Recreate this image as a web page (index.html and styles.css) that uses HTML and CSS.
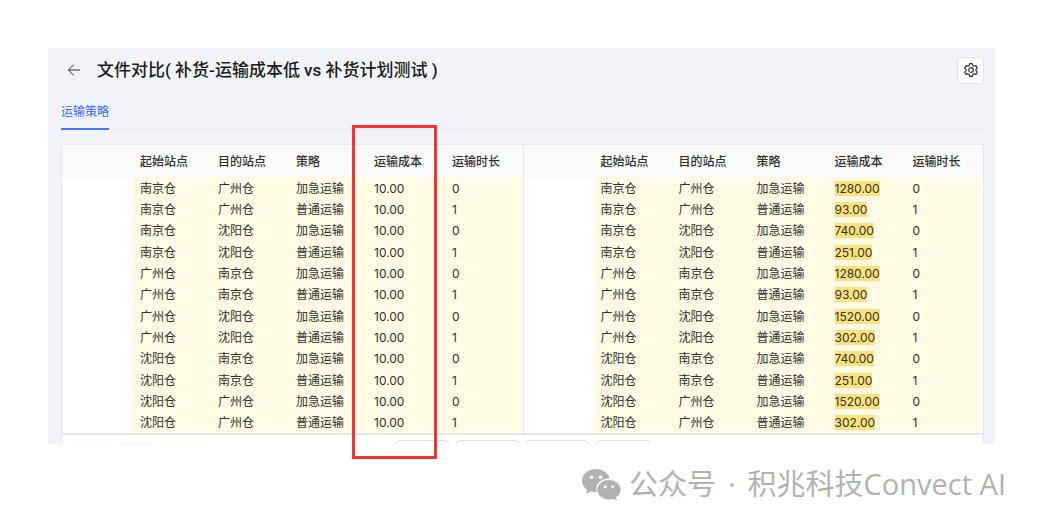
FILE: index.html
```html
<!DOCTYPE html>
<html lang="zh-CN">
<head>
<meta charset="utf-8">
<meta name="viewport" content="width=device-width, initial-scale=1">
<title>文件对比</title>
<link rel="stylesheet" href="styles.css">
</head>
<body>
<main class="app">
  <header class="topbar">
    <button class="back" type="button" aria-label="返回">
      <svg viewBox="0 0 14 14" width="14" height="14" fill="none" stroke="currentColor" stroke-width="1"><path d="M13 7H1.4M6.8 1.6 1.4 7l5.4 5.4"/></svg>
    </button>
    <h1 class="title">文件对比( 补货-运输成本低 vs 补货计划测试 )</h1>
    <button class="settings" type="button" aria-label="设置">
      <svg viewBox="0 0 16 16" width="16" height="16" fill="none" stroke="currentColor" stroke-width="1.2" stroke-linejoin="round"><path d="M6.7 1.6h2.6l.5 1.8 1.3.8 1.9-.5 1.3 2.2L13 7.2v1.6l1.3 1.3-1.3 2.2-1.9-.5-1.3.8-.5 1.8H6.7l-.5-1.8-1.3-.8-1.9.5-1.3-2.2L3 8.800V7.200L1.700 5.900 3 3.700l1.900.5 1.300-.8z"/><circle cx="8" cy="8" r="2.300"/></svg>
    </button>
  </header>
  <nav class="tabs" role="tablist">
    <button class="tab" type="button" role="tab" aria-selected="true">运输策略</button>
  </nav>
  <section class="compare">
    <div class="panels">
      <table class="sheet" id="before"></table>
      <table class="sheet" id="after"></table>
    </div>
    <footer class="actions">
      <div class="legend"><span class="chip added"></span><span class="chip removed"></span><span class="chip changed"></span></div>
      <div class="buttons"><span class="stub"></span><span class="stub wide"></span><span class="stub wide"></span><span class="stub"></span></div>
    </footer>
    <div class="callout"></div>
  </section>
</main>
<div class="credit">
  <svg class="wechat" viewBox="0 0 39 33" width="39" height="33">
    <path fill="#b2b2b2" d="M14 1C6.300 1 0 6.200 0 12.800c0 3.700 2 6.900 5.200 9.100L4 26l4.700-2.500c1.700.5 3.500.8 5.300.8h.8c-.3-1-.5-2-.5-3 0-6 5.700-10.700 12.500-10.700h.8C26.200 5 20.700 1 14 1z"/>
    <path fill="#b2b2b2" d="M27 12c-6.500 0-11.600 4.300-11.600 9.700S20.500 31.400 27 31.400c1.500 0 2.900-.2 4.200-.6L35 33l-1-3.700c2.800-1.800 4.600-4.500 4.600-7.600C38.600 16.300 33.500 12 27 12z"/>
    <g fill="#fff"><circle cx="9.400" cy="9.200" r="1.800"/><circle cx="18.600" cy="9.200" r="1.800"/><circle cx="23.200" cy="18.700" r="1.500"/><circle cx="30.700" cy="18.700" r="1.500"/></g>
  </svg>
  <span class="credit-text"><span>公众号</span> <span>·</span> <span>积兆科技Convect AI</span></span>
</div>
<script src="app.js"></script>
</body>
</html>
```
FILE: styles.css
```css
* { box-sizing: border-box; }

body {
  margin: 0;
  padding: 48px 45px 20px 48px;
  background: #fff;
  color: #303030;
  font-family: Inter, "Noto Sans CJK SC", sans-serif;
  font-size: 12px;
}

button {
  padding: 0;
  border: 0;
  background: none;
  color: inherit;
  font: inherit;
}

.app {
  padding: 8px 11px 0 13px;
  background: #f3f4f9;
}

.topbar {
  display: flex;
  align-items: center;
  height: 28px;
}

.back {
  display: flex;
  margin-left: 6px;
}

.title {
  flex: 1;
  margin: 0 0 0 16px;
  font-family: Roboto, "Noto Sans CJK SC", sans-serif;
  font-size: 17px;
  line-height: 24px;
  font-weight: 500;
  color: #1a1a1a;
}

.settings {
  display: flex;
  align-items: center;
  justify-content: center;
  width: 27px;
  height: 27px;
  border: 1px solid #e4e5e8;
  border-radius: 4px;
  background: #fff;
}

.tabs {
  display: flex;
  height: 46px;
  border-bottom: 1px solid #eeeff3;
}

.tab {
  height: 46px;
  padding-top: 11px;
  border-bottom: 2px solid #4a76ff;
  color: #3467ff;
  line-height: 18px;
}

.compare {
  position: relative;
  margin-top: 14px;
  border: solid #e6e7ea;
  border-width: 1px 1px 0;
  background: #fff;
}

.panels {
  display: grid;
  grid-template-columns: 1fr 1fr;
  border-bottom: 2px solid #e6e7ea;
}

.sheet {
  width: 100%;
  height: 288px;
  border-spacing: 0;
  table-layout: fixed;
}

.sheet + .sheet { border-left: 1px solid #e6e7ea; }

.sheet th,
.sheet td {
  padding: 2px 0 0 7px;
  line-height: 16px;
  text-align: left;
  white-space: nowrap;
}

.sheet th {
  height: 32px;
  background: #fafafa;
  font-weight: 500;
}

.sheet td { background: #fffae4; }

.sheet .gutter {
  width: 71px;
  padding: 0;
}

.sheet + .sheet .gutter { width: 70px; }

.sheet td.gutter { background: #fff; }

.field { width: 78px; }

.sheet .field:last-child { width: auto; }

mark {
  background: #ffe27c;
  color: inherit;
}

.actions {
  display: grid;
  grid-template-columns: 333px 1fr;
  height: 9px;
  overflow: hidden;
}

.legend,
.buttons {
  display: flex;
  gap: 7px;
}

.legend { padding: 8px 0 0 9px; }

.buttons { padding-top: 5px; }

.chip {
  width: 38px;
  height: 20px;
  border-radius: 4px;
}

.added { background: #eefbf3; }
.removed { background: #fff0f0; }
.changed { background: #fff9e2; }

.stub {
  width: 54px;
  height: 24px;
  border: 1px solid #dedede;
  border-radius: 4px;
}

.stub.wide { width: 63px; }

.callout {
  position: absolute;
  top: -20px;
  bottom: -15px;
  left: 290px;
  width: 85px;
  border: 3px solid #ff3030;
}

.credit {
  display: flex;
  align-items: center;
  justify-content: flex-end;
  gap: 8px;
  margin: 19px -11px 0 0;
  color: #b2b2b2;
}

.credit-text {
  display: flex;
  gap: 12px;
  font-family: "Open Sans", "Noto Sans CJK SC", sans-serif;
  font-size: 29px;
  line-height: 42px;
  font-weight: 400;
}
```
FILE: app.js
```js
const headings = ["起始站点", "目的站点", "策略", "运输成本", "运输时长"];
const routes = [
  ["南京仓", "广州仓", "1280.00", "93.00"],
  ["南京仓", "沈阳仓", "740.00", "251.00"],
  ["广州仓", "南京仓", "1280.00", "93.00"],
  ["广州仓", "沈阳仓", "1520.00", "302.00"],
  ["沈阳仓", "南京仓", "740.00", "251.00"],
  ["沈阳仓", "广州仓", "1520.00", "302.00"]
];

function row(cells) {
  return `<tr><td class="gutter"></td>${cells.map(c => `<td>${c}</td>`).join("")}</tr>`;
}

function fill(id, cost) {
  const head = headings.map(h => `<th class="field" scope="col">${h}</th>`).join("");
  const body = routes.map(([from, to, express, standard]) =>
    row([from, to, "加急运输", cost(express), "0"]) +
    row([from, to, "普通运输", cost(standard), "1"])
  ).join("");
  document.getElementById(id).innerHTML =
    `<thead><tr><th class="gutter"></th>${head}</tr></thead><tbody>${body}</tbody>`;
}

fill("before", () => "10.00");
fill("after", value => `<mark>${value}</mark>`);
```
